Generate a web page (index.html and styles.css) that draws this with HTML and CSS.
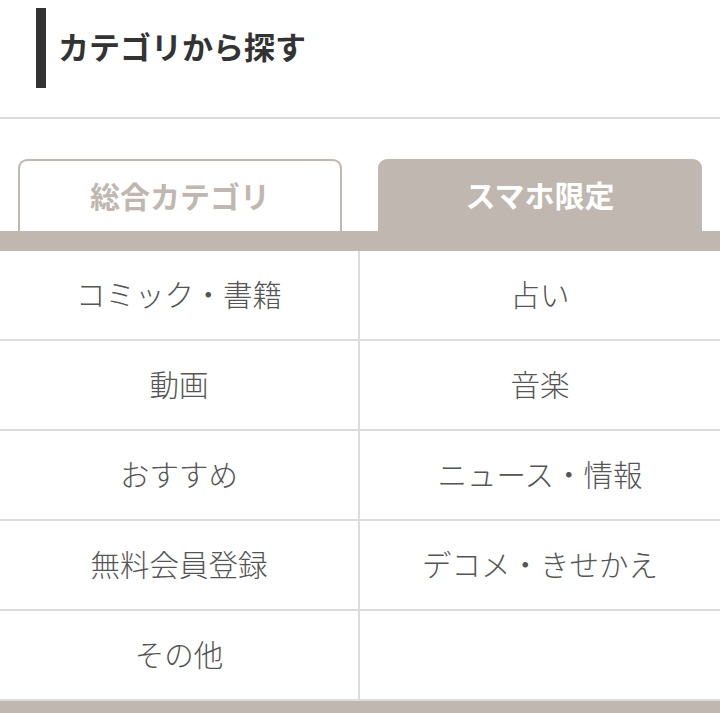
FILE: index.html
```html
<!DOCTYPE html>
<html lang="ja">
<head>
<meta charset="utf-8">
<link rel="stylesheet" href="styles.css">
</head>
<body>
<div class="heading"><h2 class="heading-text">カテゴリから探す</h2></div>
<div class="sep"></div>
<div class="tabs">
  <div class="tab tab-off">総合カテゴリ</div>
  <div class="tab tab-on">スマホ限定</div>
</div>
<div class="band"></div>
<div class="grid">
  <div class="cell">コミック・書籍</div>
  <div class="cell">占い</div>
  <div class="cell">動画</div>
  <div class="cell">音楽</div>
  <div class="cell">おすすめ</div>
  <div class="cell">ニュース・情報</div>
  <div class="cell">無料会員登録</div>
  <div class="cell">デコメ・きせかえ</div>
  <div class="cell">その他</div>
  <div class="cell"></div>
</div>
<div class="band band-bottom"></div>
</body>
</html>
```
FILE: styles.css
```css
html, body {
  margin: 0;
  padding: 0;
  background: #fff;
  font-family: "Noto Sans CJK JP", "Noto Sans", sans-serif;
}
.heading {
  margin: 8px 0 0 36px;
  height: 80px;
  border-left: 10px solid #333;
  display: flex;
  align-items: center;
  padding-left: 12px;
  box-sizing: border-box;
  padding-bottom: 6px;
}
.heading-text {
  margin: 0;
  font-size: 31px;
  font-weight: 700;
  color: #333;
}
.sep {
  margin-top: 29px;
  border-top: 2px solid #dcdcdc;
}
.tabs {
  padding: 40px 18px 0;
  display: grid;
  grid-template-columns: 1fr 1fr;
  gap: 36px;
}
.tab {
  height: 72px;
  box-sizing: border-box;
  border-radius: 9px 9px 0 0;
  display: flex;
  align-items: center;
  justify-content: center;
  font-size: 30px;
  font-weight: 700;
  padding-bottom: 2px;
}
.tab-off {
  border: 2px solid #c0b7b0;
  border-bottom: none;
  color: #c0b7b0;
  background: #fff;
}
.tab-on {
  background: #c0b7b0;
  color: #fff;
}
.band {
  height: 20px;
  background: #c0b7b0;
}
.band-bottom {
  height: 12px;
}
.grid {
  display: grid;
  grid-template-columns: 360px 360px;
}
.cell {
  height: 90px;
  box-sizing: border-box;
  border-bottom: 2px solid #dcdcdc;
  display: flex;
  align-items: center;
  justify-content: center;
  font-size: 29.5px;
  font-weight: 300;
  color: #555;
  padding-bottom: 4px;
}
.cell:nth-child(odd) {
  border-right: 2px solid #dcdcdc;
}
```
